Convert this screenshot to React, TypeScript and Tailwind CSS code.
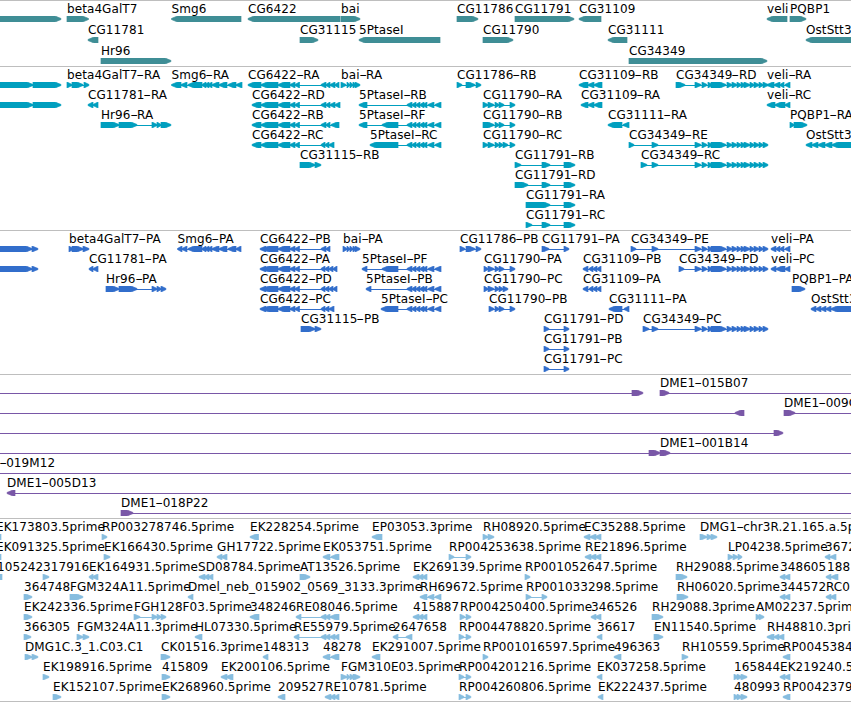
import clsx from "clsx";

type Strand = ">" | "<";

interface Feature {
  label: string;
  x: number;
  strand: Strand;
  blocks: number[][];
}

interface TrackData {
  color: string;
  height: string;
  rowHeight: string;
  rows: string[][];
}

// shared exon lists
const GT = "695-701,702-707,708-712,711-726,727-732,732-737,737-741,741-745,744-750,750-754,754-759,759-763,763-768";
const PT = "407-412,412-416,416-420,420-424,423-427,428-434,435-441";
const CG = "278-290,290-295,295-299.5";
const SM = "188-202,202-206,205-209,208-212,212-219,219-227,228-236";

// "label|x|strand|start-end,start-end"
const TRACKS: TrackData[] = [
  {
    color: "text-[#3f8e96]",
    height: "h-[66px]",
    rowHeight: "h-[21px]",
    rows: [
      [
        "||>|-9_61",
        "beta4GalT7|67|>|67-88.5",
        "Smg6|171.5|<|171.5-241",
        "CG6422|248|<|248-340",
        "bai|341|>|341-360",
        "CG11786|457|>|457-478",
        "CG11791|515|>|515-574",
        "CG31109|579|<|579-601",
        "veli|767|<|767-787",
        "PQBP1|790|>|790-806",
      ],
      [
        "CG11781|88|<|88-98",
        "CG31115|300|>|300-318",
        "5PtaseI|359|<|359-440",
        "CG11790|483|>|483-513",
        "CG31111|608|<|608-627",
        "OstStt3|806|<|806-860",
      ],
      ["Hr96|101|>|101-171", "CG34349|629|>|629-767"],
    ],
  },
  {
    color: "text-[#009fbf]",
    height: "h-[164px]",
    rowHeight: "h-[20px]",
    rows: [
      [
        "||>|-9_33,33-61",
        "beta4GalT7-RA|67|>|67-72,72-83,84-89",
        `Smg6-RA|171.5|<|171.5-181,181-187,${SM},236-242`,
        `CG6422-RA|248|<|248-261,261-278,${CG},321-326,326-330,330-335,335-339`,
        "bai-RA|341|>|341-346,347-350,350-353,353-356,355-360",
        "CG11786-RB|457|>|457-462,466-475,476-481",
        "CG31109-RB|579|<|579-588,588-594,594-602",
        `CG34349-RD|676|>|676-685,${GT}`,
        "veli-RA|767|<|767-774,774-780,780-784,785-790",
      ],
      [
        "||>|-9_33,33-61",
        "CG11781-RA|88|<|88-93,93-98",
        `CG6422-RD|252|<|252-261,261-278,${CG},321-326,326-330,330-335,335-340`,
        `5PtaseI-RB|359|<|359-367,${PT}`,
        "CG11790-RA|483|>|483-488,488-494,495-499,499-504,510-515",
        "CG31109-RA|581|<|581-588,588-594,594-602",
        "veli-RC|767|<|767-775,775-785,785-790",
      ],
      [
        "Hr96-RA|101|>|101-119,119-137,152-157,157-161,161-171",
        `CG6422-RB|252|<|252-261,261-278,${CG},321-326,326-330,331-339`,
        `5PtaseI-RF|359|<|359-367,382-398,${PT}`,
        "CG11790-RB|483|>|483-494,495-499,499-504,510-515",
        "CG31111-RA|608|<|608-622,623-629",
        "PQBP1-RA|790|>|790-794,794-807",
      ],
      [
        `CG6422-RC|252|<|252-261,261-278,${CG},321-325,325-329,329-334`,
        `5PtaseI-RC|370|<|370-398,${PT}`,
        "CG11790-RC|483|>|483-488,488-494,495-499,499-503,503-508,510-515",
        `CG34349-RE|629|>|629-634,652-658,${GT}`,
        "OstStt3-RA|806|<|806-812,812-818,818-825,825-832,832-860",
      ],
      [
        "CG31115-RB|300|>|300-315,315-321",
        "CG11791-RB|515|>|515-521,542-550,564-575",
        `CG34349-RC|641|>|641-647,652-658,${GT}`,
      ],
      ["CG11791-RD|515|>|515-528,542-550,564-575"],
      ["CG11791-RA|526|>|526-550,564-575"],
      ["CG11791-RC|526|>|526-532,542-550,564-575"],
    ],
  },
  {
    color: "text-[#326ecb]",
    height: "h-[144px]",
    rowHeight: "h-[20px]",
    rows: [
      [
        "||>|-9_32,32-38",
        "beta4GalT7-PA|69|>|69-73,72-83,83-89",
        `Smg6-PA|177.5|<|177.5-182,182-187,${SM},236-241`,
        `CG6422-PB|260|<|260-266,263-278,${CG},321-326,326-330`,
        "bai-PA|343|>|343-347,347-350,350-353,353-356,355-360",
        "CG11786-PB|460|>|460-465,466-475,476-481",
        "CG11791-PA|542|>|542-549,564-569",
        `CG34349-PE|631|>|631-636,652-658,${GT}`,
        "veli-PA|771|<|771-776,776-780,780-784,785-790",
      ],
      [
        "||>|-9_32,32-38",
        "CG11781-PA|89|<|89-93,93-98",
        `CG6422-PA|260|<|260-266,263-278,${CG},321-325,325-329,329-333,333-337`,
        `5PtaseI-PF|362|<|362-367,382-398,${PT}`,
        "CG11790-PA|484|>|484-488,488-494,495-499,499-504,510-515",
        "CG31109-PB|583|<|583-588,589-593,593-597,597-601",
        `CG34349-PD|679|>|679-684,${GT}`,
        "veli-PC|771|<|771-776,776-785,785-790",
      ],
      [
        "Hr96-PA|106|>|106-119,119-137,152-157,157-161,161-166",
        `CG6422-PD|260|<|260-266,263-278,${CG},321-325,325-329,329-333,333-337`,
        `5PtaseI-PB|366|<|366-371,${PT}`,
        "CG11790-PC|484|>|484-488,488-494,495-499,499-503,503-508",
        "CG31109-PA|583|<|583-588,589-593,593-597,597-601",
        "PQBP1-PA|792|>|792-805",
      ],
      [
        `CG6422-PC|260|<|260-266,263-278,${CG},321-325,325-329,329-334`,
        `5PtaseI-PC|381|<|381-398,${PT}`,
        "CG11790-PB|489|>|489-494,495-499,499-504,510-515",
        "CG31111-PA|609|<|609-622,624-629",
        "OstStt3-PA|811|<|811-816,816-821,821-826,826-831,831-860",
      ],
      [
        "CG31115-PB|301|>|301-315,315-321",
        "CG11791-PD|544|>|544-549,564-569",
        `CG34349-PC|643|>|643-649,652-658,${GT}`,
      ],
      ["CG11791-PB|544|>|544-549,564-569"],
      ["CG11791-PC|544|>|544-549,564-569"],
    ],
  },
  {
    color: "text-[#7957a7]",
    height: "h-[144px]",
    rowHeight: "h-[20px]",
    rows: [
      ["||>|-20_-9,632-643", "DME1-015B07|660|>|660-669,870-880"],
      ["||<|-20_-9,735-744", "DME1-009O|784|>|784-795,870-880"],
      ["||>|-20_-9,774-783"],
      ["||>|-20_-9,649-660", "DME1-001B14|660|>|660-670,870-880"],
      ["DME1-019M12|-35.5|>|-20_-9,870-880"],
      ["DME1-005D13|7|<|7-15,870-880"],
      ["DME1-018P22|121|>|121-133,870-880"],
    ],
  },
  {
    color: "text-[#87bddf]",
    height: "h-[183px]",
    rowHeight: "h-[20px]",
    rows: [
      [
        "EK173803.5prime|-4|<|-6_1",
        "RP003278746.5prime|102|>|102-107",
        "EK228254.5prime|250|<|250-258.5",
        "EP03053.3prime|372|<|372-382",
        "RH08920.5prime|483|>|483-488,488-494",
        "EC35288.5prime|584|<|584-590,590-596,595-601",
        "DMG1-chr3R.21.165.a.5p|700|>|700-707,707-712,711-717",
      ],
      [
        "EK091325.5prime|-4|<|-6_1",
        "EK166430.5prime|104|>|104-110",
        "GH17722.5prime|217|<|217-222,221-227",
        "EK053751.5prime|323|<|323-330,331-339",
        "RP004253638.5prime|449|>|449-454,466-471",
        "RE21896.5prime|585|<|585-591,590-596,595-601",
        "LP04238.5prime|728|>|728-733,733-738,738-742",
        "3672|825|<|825-830,830-836",
      ],
      [
        "105242|-3|<|-6_2",
        "317916|43|>|43-49",
        "EK164931.5prime|89|<|89-93,92-98",
        "SD08784.5prime|198|<|199-205,204-209,208-213",
        "AT13526.5prime|300|>|300-310",
        "EK269139.5prime|413|<|413-419,418-423,422-427",
        "RP001052647.5prime|525|>|525-530",
        "RH29088.5prime|676|>|676-687",
        "348605|780|<|780-785,784-790",
        "188|827|<|826-831,831-838",
      ],
      [
        "364748|24|>|24-32",
        "FGM324A11.5prime|70|>|70-83",
        "Dmel_neb_015902_0569_3133.3prime|188|<|188-193",
        "RH69672.5prime|420|<|420-427,428-434,435-441",
        "RP001033298.5prime|526|>|526-531,542-547",
        "RH06020.5prime|677|>|677-688",
        "344572|780|<|780-785,784-790",
        "RC0|826|<|826-831,830-836",
      ],
      [
        "EK242336.5prime|24|>|24-32",
        "FGH128F03.5prime|134|>|134-140,152-157,157-161,161-166",
        "348246|250|<|250-259",
        "RE08046.5prime|296|<|296-301,321-326,325-330,330-339",
        "415887|413|<|413-419,418-423,422-427",
        "RP004250400.5prime|460|>|460-465,466-471",
        "346526|591|<|591-596,595-601",
        "RH29088.3prime|652|>|652-663",
        "AM02237.5prim|756|>|756-760,759-764",
      ],
      [
        "366305|24|>|24-31",
        "FGM324A11.3prime|77|>|77-83,83-89",
        "HL07330.5prime|195|<|195-202",
        "RE55979.5prime|294|<|294-299,321-326,325-330,330-335,334-339",
        "2647658|393|<|393-398,406-412",
        "RP004478820.5prime|459|>|459-464,466-471",
        "36617|597|<|597-602",
        "EN11540.5prime|654|>|654-663",
        "RH48810.3prim|767|<|767-774,774-779,778-784",
      ],
      [
        "DMG1C.3_1.C03.C1|25|>|25-32,32-38",
        "CK01516.3prime|161|>|161-170",
        "148313|263|<|263-268",
        "48278|323|<|323-330,331-339",
        "EK291007.5prime|372|<|372-380",
        "RP001016597.5prime|483|>|483-488",
        "496363|614|<|614-621",
        "RH10559.5prime|682|>|682-688",
        "RP0045384|783|<|783-790",
      ],
      [
        "EK198916.5prime|43|>|43-49",
        "415809|162|>|162-170",
        "EK200106.5prime|221|<|221-227,226-233",
        "FGM310E03.5prime|341|>|341-347,347-350,350-354,353-360",
        "RP004201216.5prime|459|>|459-464,466-471",
        "EK037258.5prime|597|<|597-602",
        "165844|734|>|734-738,737-742,741-747",
        "EK219240.5|780|<|780-785,784-790",
      ],
      [
        "EK152107.5prime|53|>|53-61",
        "EK268960.5prime|162|>|162-170",
        "209527|278|<|278-285",
        "RE10781.5prime|325|<|325-331,330-335,334-339",
        "RP004260806.5prime|459|>|459-464,466-471",
        "EK222437.5prime|598|<|598-603",
        "480993|734|>|734-738,737-742,741-747",
        "RP0042379|783|<|783-790",
      ],
    ],
  },
];

// negative starts use "_" as the range separator
function parseFeature(text: string): Feature {
  const [label, x, strand, blocks] = text.split("|");
  return {
    label,
    x: Number(x),
    strand: strand as Strand,
    blocks: blocks
      .split(",")
      .map((b) => b.split(b.includes("_") ? "_" : "-").map(Number)),
  };
}

function blockPoints([a, b]: number[], strand: Strand) {
  const tip = Math.min(b - a, 6);
  return strand === ">"
    ? `${a},0 ${b - tip},0 ${b},2.5 ${b},3.5 ${b - tip},6 ${a},6`
    : `${b},0 ${a + tip},0 ${a},2.5 ${a},3.5 ${a + tip},6 ${b},6`;
}

// the hyphen is drawn wider than the font's own
function Label({ text }: { text: string }) {
  return (
    <>
      {text.split("-").map((part, i) => (
        <span key={i}>
          {i > 0 && (
            <span className="inline-block w-[6.5px] text-center">
              <span className="inline-block scale-x-180">-</span>
            </span>
          )}
          {part}
        </span>
      ))}
    </>
  );
}

function Row({ items, height }: { items: string[]; height: string }) {
  const features = items.map(parseFeature);
  return (
    <div className={clsx("relative", height)}>
      {features.map((f, i) => (
        <span
          key={i}
          className="absolute top-px text-xs leading-[15px] tracking-[0.08px] whitespace-nowrap text-black"
          style={{ left: f.x }}
        >
          <Label text={f.label} />
        </span>
      ))}
      <svg
        className="absolute left-0 top-[15px] h-[6px] w-[851px]"
        fill="currentColor"
        stroke="currentColor"
        strokeWidth={0}
      >
        {features.map((f, i) => {
          const start = f.blocks[0][0];
          const end = f.blocks[f.blocks.length - 1][1];
          return (
            <g key={i}>
              {f.blocks.length > 1 && (
                <rect x={start + 1} y={3} width={end - start - 2} height={1} />
              )}
              {f.blocks.map((b, j) => (
                <polygon key={j} points={blockPoints(b, f.strand)} strokeWidth={0.7} />
              ))}
            </g>
          );
        })}
      </svg>
    </div>
  );
}

function Track({ track }: { track: TrackData }) {
  return (
    <section className={clsx("border-t border-[#bebebe]", track.height, track.color)}>
      {track.rows.map((items, i) => (
        <Row key={i} items={items} height={track.rowHeight} />
      ))}
    </section>
  );
}

function App() {
  return (
    <main className="h-[702px] w-[851px] overflow-hidden bg-white font-['DejaVu_Sans',sans-serif]">
      {TRACKS.map((track, i) => (
        <Track key={i} track={track} />
      ))}
      <div className="border-t border-[#bebebe]" />
    </main>
  );
}

export default App;
